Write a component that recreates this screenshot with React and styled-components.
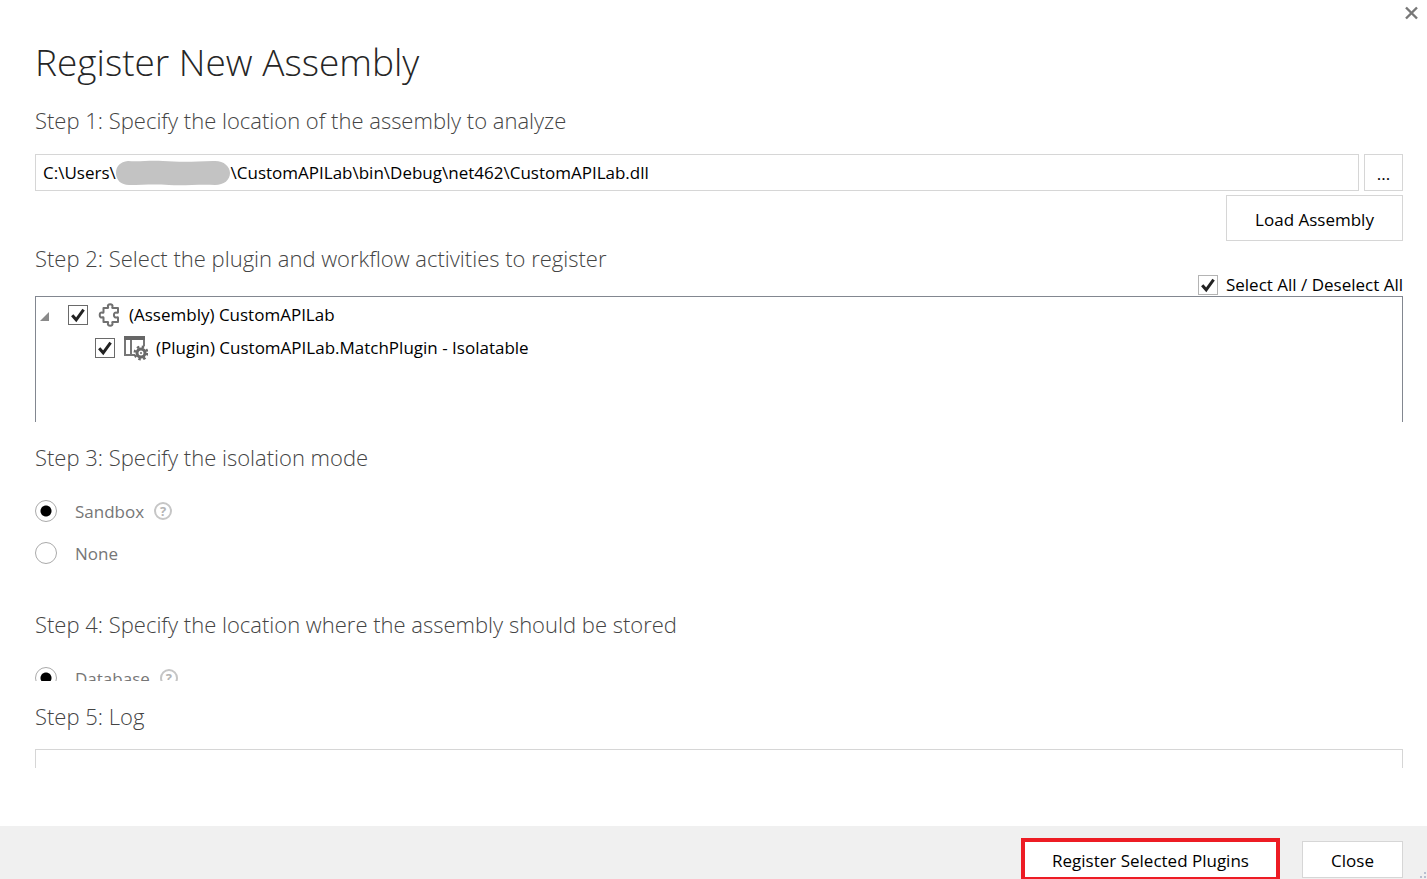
import React, { useState } from 'react';
import styled, { createGlobalStyle } from 'styled-components';

const GlobalStyle = createGlobalStyle`
  *, *::before, *::after { box-sizing: border-box; }
  html, body { margin: 0; background: #fff; }
  body { font-family: "Open Sans", "Noto Sans", sans-serif; font-size: 17px; line-height: 23px; color: #000; }
  button, input { font: inherit; color: inherit; }
`;

const Dialog = styled.div`
  display: flex;
  flex-direction: column;
  height: 100vh;
  overflow: hidden;
`;

const TitleBar = styled.div`
  display: flex;
  justify-content: flex-end;
  flex: none;
  padding: 6px 8px 0 0;
`;

const DismissButton = styled.button`
  display: block;
  width: 15px;
  height: 15px;
  padding: 0;
  border: 0;
  background: none;
  svg { display: block; }
`;

const Content = styled.main`
  flex: 1;
  min-height: 0;
  padding: 13px 24px 0 35px;
`;

const Title = styled.h1`
  margin: 0;
  font-size: 37px;
  line-height: 56px;
  font-weight: 300;
  color: #262626;
`;

const Section = styled.section`
  height: ${(p) => p.$height}px;
  padding-top: ${(p) => p.$top || 0}px;
  overflow: hidden;
`;

const StepHeading = styled.h2`
  margin: 0;
  font-size: 22px;
  line-height: 30px;
  font-weight: 300;
  color: #444;
`;

const PathRow = styled.div`
  display: flex;
  gap: 5px;
  margin-top: 19px;
`;

const PathField = styled.div`
  position: relative;
  flex: 1;
`;

const PathInput = styled.input`
  display: block;
  width: 100%;
  height: 37px;
  padding: 0 7px;
  border: 1px solid #d6d6d6;
  outline: none;
  background: #fff;
`;

const Redaction = styled.svg`
  position: absolute;
  left: 80px;
  top: 6px;
`;

const Button = styled.button`
  flex: none;
  width: ${(p) => p.$width}px;
  height: ${(p) => p.$height}px;
  padding: 2px 0 0;
  border: 1px solid #d6d6d6;
  background: #fff;
`;

const HighlightedButton = styled(Button)`
  border: 4px solid #ed1c24;
`;

const EndRow = styled.div`
  display: flex;
  justify-content: flex-end;
  margin-top: ${(p) => p.$top || 0}px;
`;

const CheckLabel = styled.label`
  display: flex;
  align-items: center;
  gap: 8px;
`;

const CheckBox = styled.input`
  appearance: none;
  flex: none;
  width: 20px;
  height: 20px;
  margin: 0;
  border: 1px solid ${(p) => (p.$soft ? '#b4b4b4' : '#6a6a6a')};
  background: #fff;
  &:checked {
    background: #fff url("data:image/svg+xml,%3Csvg xmlns='http://www.w3.org/2000/svg' viewBox='0 0 18 18'%3E%3Cpath d='M3.2 9.2l4 4.6L14.6 3.6' fill='none' stroke='%23222' stroke-width='3'/%3E%3C/svg%3E") center / 18px 18px no-repeat;
  }
`;

const Tree = styled.ul`
  list-style: none;
  height: 128px;
  margin: 0;
  padding: 1px 4px;
  border: 1px solid #828790;
  border-bottom: 0;
`;

const TreeRow = styled.li`
  display: flex;
  align-items: center;
  height: 33px;
  padding-left: ${(p) => p.$indent || 0}px;
`;

const Expander = styled.button`
  display: block;
  width: 28px;
  height: 24px;
  padding: 0;
  border: 0;
  background: none;
  svg { display: block; }
`;

const TreeIcon = styled.svg`
  flex: none;
  width: 25px;
  height: 26px;
`;

const Options = styled.div`
  padding-top: 18px;
`;

const RadioRow = styled.div`
  display: flex;
  align-items: center;
  height: 42px;
  gap: 10px;
  color: #767676;
`;

const RadioLabel = styled.label`
  display: flex;
  align-items: center;
  gap: 18px;
`;

const Radio = styled.input`
  appearance: none;
  flex: none;
  width: 22px;
  height: 22px;
  margin: 0;
  border: 1px solid #aaa;
  border-radius: 50%;
  background: #fff;
  &:checked { background: radial-gradient(circle, #000 5px, #fff 6px); }
`;

const HelpButton = styled.button`
  width: 18px;
  height: 18px;
  padding: 0;
  border: 2px solid #c6c6c6;
  border-radius: 50%;
  background: #fff;
  color: #b4b4b4;
  font-size: 13px;
  line-height: 14px;
  font-weight: 700;
`;

const LogBox = styled.div`
  height: 19px;
  margin-top: 18px;
  border: 1px solid #d6d6d6;
  border-bottom: 0;
`;

const Footer = styled.footer`
  display: flex;
  flex: none;
  align-items: flex-start;
  justify-content: flex-end;
  gap: 22px;
  height: 53px;
  padding: 12px 24px 0;
  background: #f0f0f0;
  position: relative;
  ${Button}:last-of-type { margin-top: 3px; }
`;

const Grip = styled.svg`
  position: absolute;
  right: 0;
  bottom: 0;
`;

function PuzzleIcon() {
  return (
    <TreeIcon viewBox="0 0 25 26" aria-hidden="true">
      <path
        d="M7.5 6h4.2c.6 0 .5-.6.3-1.1C11.4 3.3 12.5 2.3 14.2 2.3s2.800 1 2.200 2.600c-.2.500-.3 1.100.3 1.100h5.300v4.300c0 .6-.5.6-1 .4-1.700-.7-3.100.4-3.100 2.300s1.400 3 3.100 2.300c.5-.2 1-.2 1 .4V20h-5.300c-.6 0-.5.600-.3 1.100.6 1.600-.5 2.600-2.200 2.600s-2.800-1-2.200-2.600c.2-.5.3-1.100-.3-1.100H7.500v-4.300c0-.6-.5-.6-1-.4-1.600.7-2.800-.4-2.800-2.300s1.200-3 2.800-2.300c.5.200 1 .2 1-.4z"
        fill="none" stroke="#707070" strokeWidth="2" strokeLinejoin="round"
      />
    </TreeIcon>
  );
}

function PluginIcon() {
  return (
    <TreeIcon viewBox="0 0 25 26" aria-hidden="true">
      <path d="M1 1h21v4H1z" fill="#666" />
      <path d="M2 5v15H12M8 5v15M21 5v6" fill="none" stroke="#777" strokeWidth="2" />
      <circle cx="18" cy="18" r="6.300" fill="none" stroke="#6a6a6a" strokeWidth="2.400" strokeDasharray="2.474 2.474" />
      <circle cx="18" cy="18" r="4" fill="#fff" stroke="#6a6a6a" strokeWidth="3" />
      <circle cx="18" cy="18" r="1" fill="#6a6a6a" />
    </TreeIcon>
  );
}

function Check({ label, soft, icon }) {
  const [on, setOn] = useState(true);
  return (
    <CheckLabel>
      <CheckBox type="checkbox" $soft={soft} checked={on} onChange={() => setOn(!on)} />
      {icon}
      <span>{label}</span>
    </CheckLabel>
  );
}

function Option({ name, label, defaultChecked, help }) {
  return (
    <RadioRow>
      <RadioLabel>
        <Radio type="radio" name={name} defaultChecked={defaultChecked} />
        <span>{label}</span>
      </RadioLabel>
      {help && <HelpButton type="button">?</HelpButton>}
    </RadioRow>
  );
}

export default function App() {
  return (
    <Dialog role="dialog">
      <GlobalStyle />
      <TitleBar>
        <DismissButton type="button" aria-label="Dismiss">
          <svg width="15" height="15" viewBox="0 0 15 15">
            <path d="M2 1.5l11 11M13 1.5l-11 11" stroke="#777" strokeWidth="2.4" />
          </svg>
        </DismissButton>
      </TitleBar>
      <Content>
        <Title>Register New Assembly</Title>
        <Section $height={153} $top={15}>
          <StepHeading>Step 1: Specify the location of the assembly to analyze</StepHeading>
          <PathRow>
            <PathField>
              <PathInput
                aria-label="Assembly location"
                defaultValue={'C:\\Users\\' + '\u00a0'.repeat(26) + '\\CustomAPILab\\bin\\Debug\\net462\\CustomAPILab.dll'}
              />
              <Redaction width="115" height="26" viewBox="0 0 115 26" aria-hidden="true">
                <path d="M13 1C25 2 34 0 48 1S76 2 98 1c10-1 17 5 17 12s-6 12-15 12c-16-1-30 1-46 0S28 25 14 25C6 25 1 20 1 13S5 2 13 1z" fill="#c3c3c3" />
              </Redaction>
            </PathField>
            <Button type="button" $width={39} $height={37}>...</Button>
          </PathRow>
          <EndRow $top={4}>
            <Button type="button" $width={177} $height={46}>Load Assembly</Button>
          </EndRow>
        </Section>
        <Section $height={179}>
          <StepHeading>Step 2: Select the plugin and workflow activities to register</StepHeading>
          <EndRow>
            <Check soft label="Select All / Deselect All" />
          </EndRow>
          <Tree>
            <TreeRow>
              <Expander type="button" aria-label="Collapse">
                <svg width="10" height="24" viewBox="0 0 10 24"><path d="M9 9v9H0z" fill="#8a8a8a" /></svg>
              </Expander>
              <Check icon={<PuzzleIcon />} label="(Assembly) CustomAPILab" />
            </TreeRow>
            <TreeRow $indent={55}>
              <Check icon={<PluginIcon />} label="(Plugin) CustomAPILab.MatchPlugin - Isolatable" />
            </TreeRow>
          </Tree>
        </Section>
        <Section $height={167} $top={20}>
          <StepHeading>Step 3: Specify the isolation mode</StepHeading>
          <Options>
            <Option name="isolation" label="Sandbox" help defaultChecked />
            <Option name="isolation" label="None" />
          </Options>
        </Section>
        <Section $height={92} $top={20}>
          <StepHeading>Step 4: Specify the location where the assembly should be stored</StepHeading>
          <Options>
            <Option name="storage" label="Database" help defaultChecked />
          </Options>
        </Section>
        <Section $height={90} $top={20}>
          <StepHeading>Step 5: Log</StepHeading>
          <LogBox role="log" />
        </Section>
      </Content>
      <Footer>
        <HighlightedButton type="button" $width={259} $height={43}>Register Selected Plugins</HighlightedButton>
        <Button type="button" $width={101} $height={37}>Close</Button>
        <Grip width="8" height="8" viewBox="0 0 8 8" aria-hidden="true">
          <path d="M5 1h2v2H5zM1 5h2v2H1zM5 5h2v2H5z" fill="#b8bfd0" />
        </Grip>
      </Footer>
    </Dialog>
  );
}
